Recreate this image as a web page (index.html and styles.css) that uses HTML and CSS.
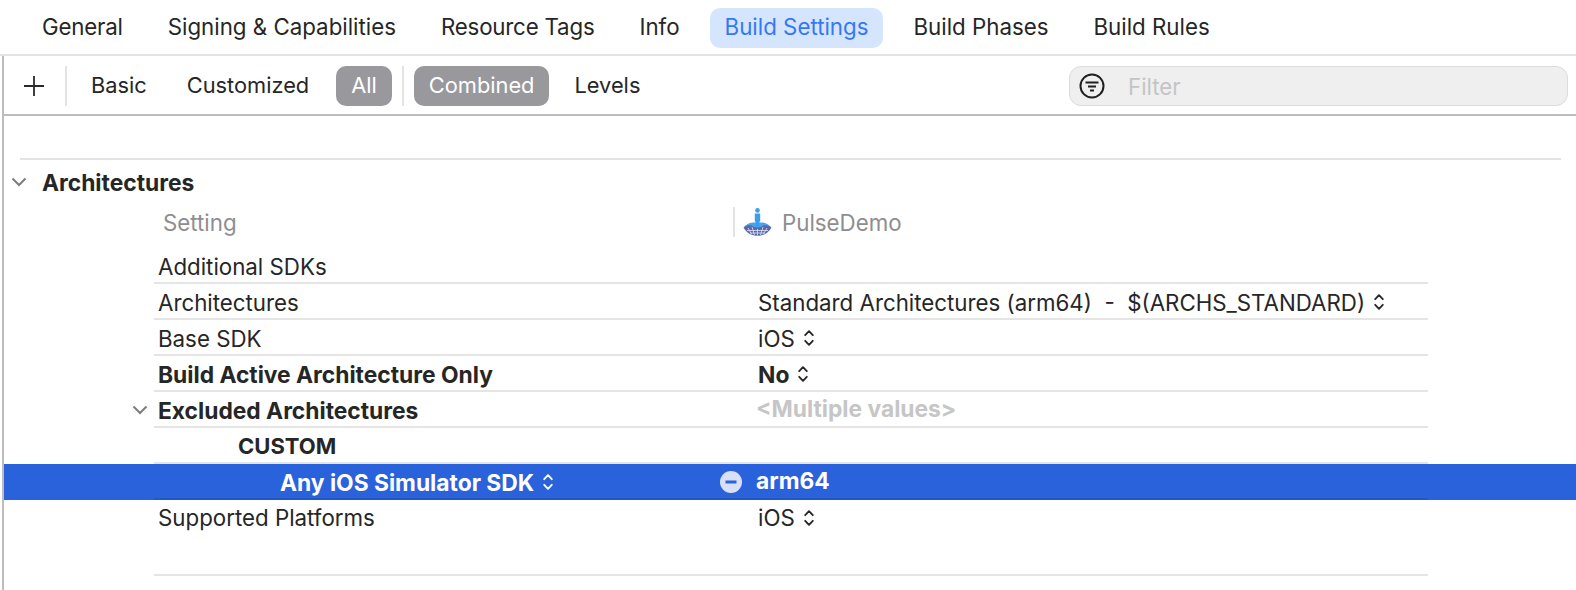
FILE: index.html
```html
<!DOCTYPE html>
<html lang="en">
<head>
<meta charset="utf-8">
<title>Build Settings</title>
<link rel="stylesheet" href="styles.css">
</head>
<body>
<svg class="defs" width="0" height="0" aria-hidden="true">
  <symbol id="updown" viewBox="0 0 10 18">
    <path d="M1.200 6.200 5 2.200 8.800 6.200M1.200 11.800 5 15.800 8.800 11.800" fill="none" stroke="currentColor" stroke-width="1.800" stroke-linecap="round" stroke-linejoin="round"/>
  </symbol>
</svg>
<nav class="tabs">
  <span class="tab tab-tight">General</span>
  <span class="tab">Signing &amp; Capabilities</span>
  <span class="tab tab-tight">Resource Tags</span>
  <span class="tab">Info</span>
  <span class="tab tab-active">Build Settings</span>
  <span class="tab">Build Phases</span>
  <span class="tab">Build Rules</span>
</nav>
<main class="main">
  <div class="toolbar">
    <svg class="plus" width="24" height="24" viewBox="0 0 24 24"><path d="M12 2v20M2 12h20" stroke="#2a2a2a" stroke-width="1.800" fill="none"/></svg>
    <span class="divider"></span>
    <span class="pill pill-basic">Basic</span>
    <span class="pill">Customized</span>
    <span class="pill pill-on pill-all">All</span>
    <span class="divider divider-tight"></span>
    <span class="pill pill-on pill-combined">Combined</span>
    <span class="pill">Levels</span>
    <div class="filter">
      <svg class="filter-icon" width="26" height="26" viewBox="0 0 26 26">
        <circle cx="13" cy="13" r="11.500" fill="none" stroke="#1f1f1f" stroke-width="2"/>
        <path d="M6.500 9.500h13M9 13.500h8M11 17.500h4" stroke="#1f1f1f" stroke-width="2" fill="none"/>
      </svg>
      <span class="filter-text">Filter</span>
    </div>
  </div>
  <div class="spacer"></div>
  <section class="section">
    <div class="section-title">
      <svg class="chev" width="16" height="10" viewBox="0 0 16 10"><path d="M1.500 1.500 8 8l6.500-6.500" fill="none" stroke="#7d7d7d" stroke-width="2"/></svg>
      <span>Architectures</span>
    </div>
    <div class="head">
      <span class="head-name">Setting</span>
      <span class="head-value">
        <svg class="app-icon" width="29" height="28" viewBox="0 0 29 28">
          <path d="M0.500 19.500 C4 16 8 15 14.500 17.500 C21 15 25 16 28.500 19.500 C25.500 25.500 19.500 27.800 14.500 27.800 C9.500 27.800 3.500 25.500 0.500 19.500Z" fill="#5a68ad"/>
          <path d="M5 20l3.500 6M9 19l2.500 8M14.500 21v6.500M20 19l-2.500 8M24 20l-3.500 6M4 22.500h21M7 25h15" stroke="#dfe5f6" stroke-width="0.800" fill="none"/>
          <path d="M1.500 18.800 C5.500 16.500 9 17 11 19 L18 19 C20 17 23.500 16.500 27.500 18.800 C24 15 21 14.500 17.500 14.500 L11.500 14.500 C8 14.500 5 15 1.500 18.800Z" fill="#49a5ea"/>
          <circle cx="14.500" cy="2.400" r="2.300" fill="#3d9ee8"/>
          <path d="M11.800 5.500h5.400v8h-.8v6h-3.800v-6h-.8z" fill="#3d9ee8"/>
        </svg>
        PulseDemo
      </span>
    </div>
    <div class="row">
      <div class="cells"><span class="name">Additional SDKs</span><span class="value"></span></div>
    </div>
    <div class="row">
      <div class="cells"><span class="name">Architectures</span><span class="value">Standard Architectures (arm64)&nbsp; -&nbsp; $(ARCHS_STANDARD)<svg class="step"><use href="#updown"/></svg></span></div>
    </div>
    <div class="row">
      <div class="cells"><span class="name">Base SDK</span><span class="value">iOS<svg class="step"><use href="#updown"/></svg></span></div>
    </div>
    <div class="row row-bold">
      <div class="cells"><span class="name">Build Active Architecture Only</span><span class="value">No<svg class="step"><use href="#updown"/></svg></span></div>
    </div>
    <div class="row row-bold">
      <svg class="row-chev" width="16" height="10" viewBox="0 0 16 10"><path d="M1.500 1.500 8 8l6.500-6.500" fill="none" stroke="#7d7d7d" stroke-width="2"/></svg>
      <div class="cells"><span class="name">Excluded Architectures</span><span class="value value-muted">&lt;Multiple values&gt;</span></div>
    </div>
    <div class="row row-bold">
      <div class="cells"><span class="name name-l1">CUSTOM</span><span class="value"></span></div>
    </div>
    <div class="row row-bold row-selected">
      <div class="cells">
        <span class="name name-l2">Any iOS Simulator SDK<svg class="step"><use href="#updown"/></svg>
          <svg class="minus" width="22" height="22" viewBox="0 0 22 22"><circle cx="11" cy="11" r="11" fill="#d7e0f7"/><rect x="5.500" y="9.500" width="11" height="3" fill="#2a62dc"/></svg>
        </span>
        <span class="value value-selected">arm64</span>
      </div>
    </div>
    <div class="row row-last">
      <div class="cells"><span class="name">Supported Platforms</span><span class="value">iOS<svg class="step"><use href="#updown"/></svg></span></div>
    </div>
  </section>
</main>
</body>
</html>
```
FILE: styles.css
```css
* { box-sizing: border-box; }
html, body { margin: 0; padding: 0; }
body {
  width: 1576px;
  height: 590px;
  overflow: hidden;
  background: #fff;
  color: #262626;
  font-family: Inter, "Liberation Sans", sans-serif;
  font-size: 22.3px;
}
.defs { position: absolute; }
.tabs {
  display: flex;
  align-items: center;
  gap: 15px;
  height: 56px;
  padding: 2px 0 0 27px;
  border-bottom: 2px solid #e3e3e3;
}
.tab {
  display: flex;
  align-items: center;
  height: 40px;
  padding: 0 15px 4px;
  border-radius: 10px;
  white-space: nowrap;
}
.tab-tight { letter-spacing: -0.2px; }
.tab-active { background: #d5e5fd; color: #3478f6; }
.main {
  margin-left: 2px;
  height: 534px;
  border-left: 2px solid #bdbdbd;
}
.toolbar {
  display: flex;
  align-items: center;
  height: 60px;
  padding: 2px 8px 0 18px;
  border-bottom: 2px solid #bdbdbd;
  font-size: 21.8px;
}
.plus { flex: none; }
.divider { width: 2px; height: 40px; margin-left: 19px; background: #e3e3e3; }
.divider-tight { margin-left: 10px; }
.pill {
  display: flex;
  align-items: center;
  height: 40px;
  padding: 0 11px 3px;
  margin-right: 18px;
  border-radius: 10px;
  white-space: nowrap;
}
.pill-basic { margin-left: 13px; }
.pill-on { background: #98989d; color: #fff; margin-right: 0; padding: 0 15px 3px; }
.pill-all { margin-left: -2px; }
.pill-combined { margin-left: 10px; margin-right: 14px; }
.filter {
  display: flex;
  align-items: center;
  width: 499px;
  height: 40px;
  margin-left: auto;
  padding-left: 9px;
  background: #efefef;
  border: 1px solid #dcdcdc;
  border-radius: 12px;
}
.filter-icon { flex: none; }
.filter-text { margin-left: 23px; color: #c4c4c4; font-size: 22.3px; }
.spacer { height: 42px; }
.section { border-top: 2px solid #e3e3e3; margin-left: 16px; margin-right: 15px; }
.section-title {
  display: flex;
  align-items: center;
  height: 44px;
  margin-left: -9px;
  font-size: 22.8px;
  font-weight: 700;
}
.chev { margin-right: 15px; }
.head { display: flex; align-items: center; height: 44px; margin-left: 143px; padding-bottom: 8px; color: #8e8e8e; }
.head-name { width: 570px; }
.head-value { display: flex; align-items: center; gap: 10px; height: 30px; padding-left: 8px; border-left: 2px solid #e3e3e3; }
.app-icon { flex: none; }
.row { display: flex; align-items: center; height: 36px; margin-left: -16px; margin-right: -15px; padding-left: 150px; position: relative; }
.row-bold { font-weight: 700; font-size: 22.8px; }
.row-chev { position: absolute; left: 128px; top: 13px; }
.cells {
  display: flex;
  align-items: center;
  width: 1274px;
  height: 36px;
  padding-top: 2px;
  border-bottom: 2px solid #e5e5e5;
}
.name { display: flex; align-items: center; width: 604px; padding-left: 4px; white-space: nowrap; }
.name-l1 { padding-left: 84px; font-size: 22px; }
.name-l2 { padding-left: 126px; padding-right: 16px; }
.value { display: flex; align-items: center; white-space: nowrap; }
.value-muted { color: #c6c6c6; margin-left: -2px; margin-top: -4px; }
.value-selected { margin-left: -2px; margin-top: -4px; }
.step { width: 10px; height: 18px; margin-left: 9px; flex: none; }
.minus { margin-left: auto; flex: none; }
.row-selected { background: #2a62dc; color: #fff; }
.row-selected .cells { border-bottom-color: #2557c6; }
.row-last .cells { height: 76px; margin-top: 40px; padding-top: 0; align-items: flex-start; }
.row-last .name, .row-last .value { margin-top: 4px; }
```
